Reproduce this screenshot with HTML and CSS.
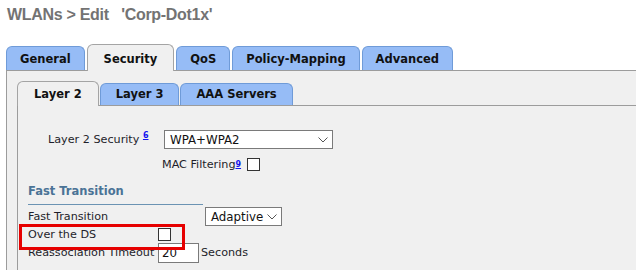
FILE: index.html
```html
<html lang="en">

<head>
    <meta charset="UTF-8">
    <meta name="viewport" content="width=device-width, initial-scale=1.0">
    <title>WLANs &gt; Edit</title>
    <link rel="stylesheet" href="styles.css">
</head>

<body>
    <h1 class="page-title">WLANs &gt; Edit &nbsp;&nbsp;'Corp-Dot1x'</h1>

    <div class="tabs">
        <div class="tab">General</div>
        <div class="tab active">Security</div>
        <div class="tab">QoS</div>
        <div class="tab">Policy-Mapping</div>
        <div class="tab">Advanced</div>
    </div>
    <div class="panel">
        <div class="tabs sub-tabs">
            <div class="tab active">Layer 2</div>
            <div class="tab">Layer 3</div>
            <div class="tab">AAA Servers</div>
        </div>
        <div class="sub-panel">
            <div class="row sec-row">
                <div class="sec-label">Layer 2 Security <a class="ref" href="#">6</a></div>
                <div class="select select-wide">
                    <span>WPA+WPA2</span>
                    <svg width="10" height="6" viewBox="0 0 10 6"><path d="M0.5 0.5 L5 5 L9.5 0.5" fill="none" stroke="#555" stroke-width="1"/></svg>
                </div>
            </div>
            <div class="row mac-row">
                <span>MAC Filtering</span><a class="ref" href="#">9</a>
                <input type="checkbox" class="check mac-check">
            </div>

            <div class="section-title">Fast Transition</div>

            <div class="row ft-row">
                <div class="ft-label">Fast Transition</div>
                <div class="select select-small">
                    <span>Adaptive</span>
                    <svg width="10" height="6" viewBox="0 0 10 6"><path d="M0.5 0.5 L5 5 L9.5 0.5" fill="none" stroke="#555" stroke-width="1"/></svg>
                </div>
            </div>
            <div class="row ds-row highlight">
                <div class="field-label">Over the DS</div>
                <input type="checkbox" class="check">
            </div>
            <div class="row ra-row">
                <div class="field-label">Reassociation Timeout</div>
                <input type="text" class="num-input" value="20">
                <span class="unit">Seconds</span>
            </div>
        </div>
    </div>
</body>

</html>
```

FILE: styles.css
```css
:root {
    --tab-blue: #96bcf6;
    --tab-blue-border: #6f9bd8;
    --tab-grey: #f0f0f0;
    --line: #9c9c9c;
}

* {
    padding: 0;
    margin: 0;
    box-sizing: border-box;
}

body {
    font-family: "DejaVu Sans", Verdana, sans-serif;
    font-size: 11.2px;
    color: #1e1e2a;
    background-color: #fff;
    height: 270px;
    overflow: hidden;
}

.page-title {
    font-family: "Liberation Sans", Arial, sans-serif;
    font-size: 16px;
    font-weight: bold;
    line-height: 20px;
    letter-spacing: -0.3px;
    color: #737373;
    padding: 5px 0 0 7px;
}

.tabs {
    display: flex;
    align-items: flex-end;
    gap: 2px;
    margin: 19px 0 0 6px;
}

.tab {
    font-size: 11.5px;
    font-weight: bold;
    line-height: 16px;
    color: #111;
    padding: 4px 13px 3px;
    background: var(--tab-blue);
    border: 1px solid var(--tab-blue-border);
    border-bottom: none;
    border-radius: 6px 6px 0 0;
    text-align: center;
}

.tab.active {
    position: relative;
    z-index: 1;
    padding: 6px 16px 4px;
    margin-bottom: -1px;
    background: var(--tab-grey);
    border-color: #a4a4a4;
}

.panel {
    margin-left: 6px;
    background: var(--tab-grey);
    border-top: 1px solid var(--line);
    border-left: 1px solid var(--line);
    padding: 10px 0 0 10px;
    height: 200px;
}

.sub-tabs {
    margin: 0;
    gap: 1px;
}

.sub-tabs .tab {
    padding: 2px 15px 3px;
}

.sub-tabs .tab.active {
    padding: 4px 16px 4px;
}

.sub-panel {
    background: var(--tab-grey);
    border-top: 1px solid var(--line);
    border-left: 1px solid var(--line);
    padding-top: 24px;
    height: 170px;
}

.row {
    display: flex;
    align-items: center;
    line-height: 14px;
}

.sec-row {
    height: 19px;
}

.sec-label {
    width: 146px;
    padding-left: 30px;
}

.ref {
    font-size: 8px;
    font-weight: bold;
    color: #1515ee;
    vertical-align: 5px;
    line-height: 8px;
}

.select {
    display: flex;
    align-items: center;
    justify-content: space-between;
    height: 19px;
    background: #fff;
    border: 1px solid #7a7a7a;
    padding: 0 4px 0 5px;
    font-size: 11.8px;
    color: #111;
}

.select-wide {
    width: 169px;
}

.select-small {
    width: 77px;
}

.mac-row {
    height: 13px;
    margin-top: 9px;
    padding-left: 144px;
}

.check {
    appearance: none;
    width: 13px;
    height: 13px;
    margin: 0;
    background: #fff;
    border: 1px solid #333;
}

.mac-check {
    margin-left: 6px;
}

.section-title {
    font-size: 11.5px;
    font-weight: bold;
    line-height: 14px;
    color: #4a7396;
    width: 175px;
    margin: 13px 0 0 10px;
    padding-bottom: 6px;
    border-bottom: 1px solid #6b93b3;
}

.ft-row {
    height: 19px;
    margin-top: 2px;
}

.ft-label {
    width: 187px;
    padding-left: 10px;
}

.field-label {
    width: 140px;
    padding-left: 10px;
}

.ds-row {
    height: 17px;
}

.highlight {
    position: relative;
}

.highlight::after {
    content: "";
    position: absolute;
    left: 1px;
    top: -2px;
    width: 160px;
    height: 20px;
    border: 3px solid #e60000;
}

.ra-row {
    height: 20px;
}

.num-input {
    width: 41px;
    height: 20px;
    border: 1px solid #7a7a7a;
    background: #fff;
    font-family: inherit;
    font-size: 11.8px;
    color: #111;
    padding: 0 3px;
}

.unit {
    margin-left: 2px;
}
```
